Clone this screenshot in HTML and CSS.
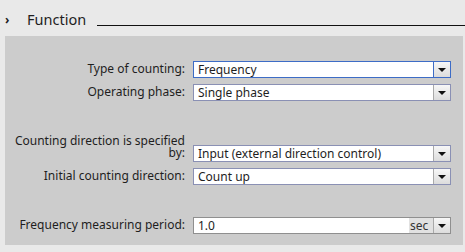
FILE: index.html
```html
<!DOCTYPE html>
<html lang="en">
<head>
  <meta charset="UTF-8" />
  <title>Function</title>
  <link rel="stylesheet" href="styles.css">
</head>
<body>

  <!-- SECTION HEADER -->
  <div class="header">
    <span class="chevron">&rsaquo;</span>
    <span class="title">Function</span>
    <span class="rule"></span>
  </div>

  <!-- PARAMETERS -->
  <div class="panel">
    <div class="row">
      <label class="label">Type of counting:</label>
      <div class="field focus">
        <span class="value">Frequency</span>
        <span class="drop"><span class="arrow"></span></span>
      </div>
    </div>
    <div class="row">
      <label class="label">Operating phase:</label>
      <div class="field">
        <span class="value">Single phase</span>
        <span class="drop"><span class="arrow"></span></span>
      </div>
    </div>

    <div class="row group">
      <label class="label">Counting direction is specified by:</label>
      <div class="field">
        <span class="value">Input (external direction control)</span>
        <span class="drop"><span class="arrow"></span></span>
      </div>
    </div>
    <div class="row">
      <label class="label">Initial counting direction:</label>
      <div class="field">
        <span class="value">Count up</span>
        <span class="drop"><span class="arrow"></span></span>
      </div>
    </div>

    <div class="row group-last">
      <label class="label">Frequency measuring period:</label>
      <div class="field plain">
        <span class="value">1.0</span>
        <span class="unit">sec</span>
        <span class="drop"><span class="arrow"></span></span>
      </div>
    </div>
  </div>

</body>
</html>
```

FILE: styles.css
```css
:root {
  --panel-color: #cccccc;
  --page-color: #e9e9e9;
  --text-color: #1e1e1e;
}
body {
  margin: 0;
  background: var(--page-color);
  font-family: "Noto Sans", "Open Sans", sans-serif;
  color: var(--text-color);
}
.header {
  display: flex;
  align-items: flex-end;
  height: 36px;
}
.chevron {
  width: 22px;
  padding-left: 5px;
  font-size: 12px;
  font-weight: bold;
  line-height: 14px;
  margin-bottom: 9px;
}
.title {
  font-size: 14.5px;
  line-height: 16px;
  margin-bottom: 9px;
}
.rule {
  flex: 1;
  margin-left: 11px;
  margin-bottom: 10px;
  border-bottom: 1px solid #111;
}
.panel {
  margin-left: 5px;
  width: 458px;
  height: 209px;
  box-sizing: border-box;
  background: var(--panel-color);
  padding: 25px 12px 0 4px;
  display: flex;
  flex-direction: column;
  gap: 6px;
}
.row {
  display: flex;
  align-items: flex-end;
  gap: 8px;
}
.row.group {
  margin-top: 28px;
}
.row.group-last {
  margin-top: 26px;
}
.label {
  width: 176px;
  text-align: right;
  font-size: 12px;
  line-height: 12px;
  padding-bottom: 3px;
}
.field {
  flex: 1;
  height: 17px;
  box-sizing: border-box;
  display: flex;
  background: #fff;
  border: 1px solid #8a90b4;
  font-size: 12px;
  line-height: 15px;
}
.field.focus {
  border-color: #3d6cc6;
}
.field.plain {
  border-color: #8f8f8f;
}
.value {
  flex: 1;
  padding-left: 4px;
  white-space: nowrap;
  overflow: hidden;
}
.unit {
  width: 23px;
  padding-left: 1px;
  background: #e1e1e1;
  color: #333;
}
.drop {
  width: 16px;
  display: flex;
  align-items: center;
  justify-content: center;
  border-left: 1px solid #a9a9a9;
  background: linear-gradient(#f7f7f7, #dcdcdc);
}
.field.focus .drop {
  border-left-color: #3d6cc6;
}
.arrow {
  width: 0;
  height: 0;
  border-left: 4px solid transparent;
  border-right: 4px solid transparent;
  border-top: 4px solid #111;
}
```
